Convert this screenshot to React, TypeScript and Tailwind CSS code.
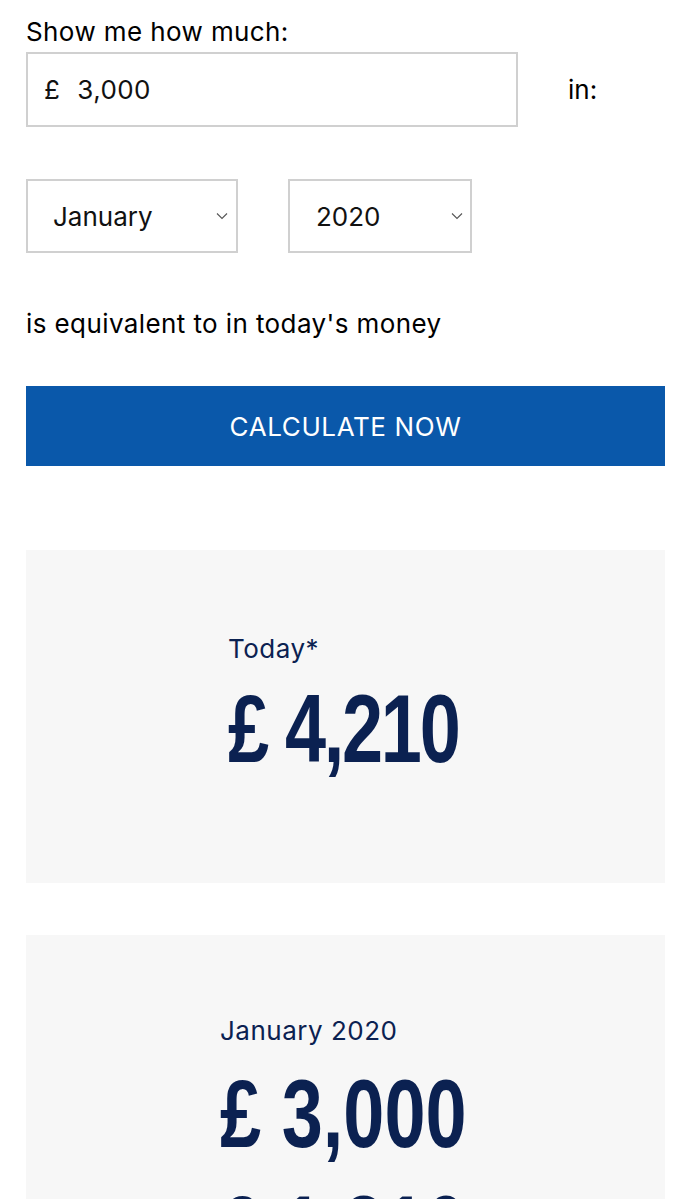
import React from "react";

const Chevron = () => (
  <svg width="12" height="8" viewBox="0 0 12 8" fill="none" className="shrink-0">
    <path d="M1 1.5 L6 6.5 L11 1.5" stroke="#555" strokeWidth="1.1" />
  </svg>
);

export default function App() {
  return (
    <div className="w-[691px] h-[1199px] overflow-hidden bg-white px-[26px] pt-[16px] font-['Inter','Liberation_Sans',sans-serif]">
      <div className="text-[26px] leading-[32px] tracking-[0.4px] text-black">Show me how much:</div>
      <div className="mt-[4px] flex items-center">
        <div className="w-[492px] h-[75px] border-2 border-[#d0d0d0] flex items-center pl-[16px] text-[26px] tracking-[0.4px] text-[#111]">
          <span className="mr-[17px]">£</span>
          <span>3,000</span>
        </div>
        <div className="ml-[50px] text-[26px] text-black">in:</div>
      </div>
      <div className="mt-[52px] flex gap-[50px]">
        <div className="w-[212px] h-[74px] border-2 border-[#d0d0d0] flex items-center justify-between pl-[25px] pr-[8px] text-[26px] text-[#111]">
          <span>January</span>
          <Chevron />
        </div>
        <div className="w-[184px] h-[74px] border-2 border-[#d0d0d0] flex items-center justify-between pl-[26px] pr-[7px] text-[26px] text-[#111]">
          <span>2020</span>
          <Chevron />
        </div>
      </div>
      <div className="mt-[55px] text-[26px] leading-[32px] tracking-[0.4px] text-black">is equivalent to in today's money</div>
      <button className="mt-[46px] w-full h-[80px] bg-[#0a58aa] text-white text-[26px] tracking-[0.6px] flex items-center justify-center">
        CALCULATE NOW
      </button>
      <div className="mt-[84px] h-[333px] bg-[#f7f7f7] pt-[83px] pl-[202px]">
        <div className="text-[26px] leading-[32px] tracking-[0.5px] text-[#0b2151]">Today*</div>
        <div className="mt-[16px] origin-left scale-x-[0.77] font-['Liberation_Sans',Arial,sans-serif] text-[96px] leading-[96px] font-bold tracking-[-3px] text-[#0b2151] whitespace-nowrap">
          £ 4,210
        </div>
      </div>
      <div className="mt-[52px] h-[400px] bg-[#f7f7f7] pt-[80px] pl-[194px]">
        <div className="text-[26px] leading-[32px] tracking-[0.5px] text-[#0b2151]">January 2020</div>
        <div className="mt-[19px] origin-left scale-x-[0.77] font-['Liberation_Sans',Arial,sans-serif] text-[96px] leading-[96px] font-bold text-[#0b2151] whitespace-nowrap">
          £ 3,000
        </div>
        <div className="mt-[20px] origin-left scale-x-[0.77] font-['Liberation_Sans',Arial,sans-serif] text-[96px] leading-[96px] font-bold text-[#0b2151] whitespace-nowrap">
          £ 1,210
        </div>
      </div>
    </div>
  );
}
